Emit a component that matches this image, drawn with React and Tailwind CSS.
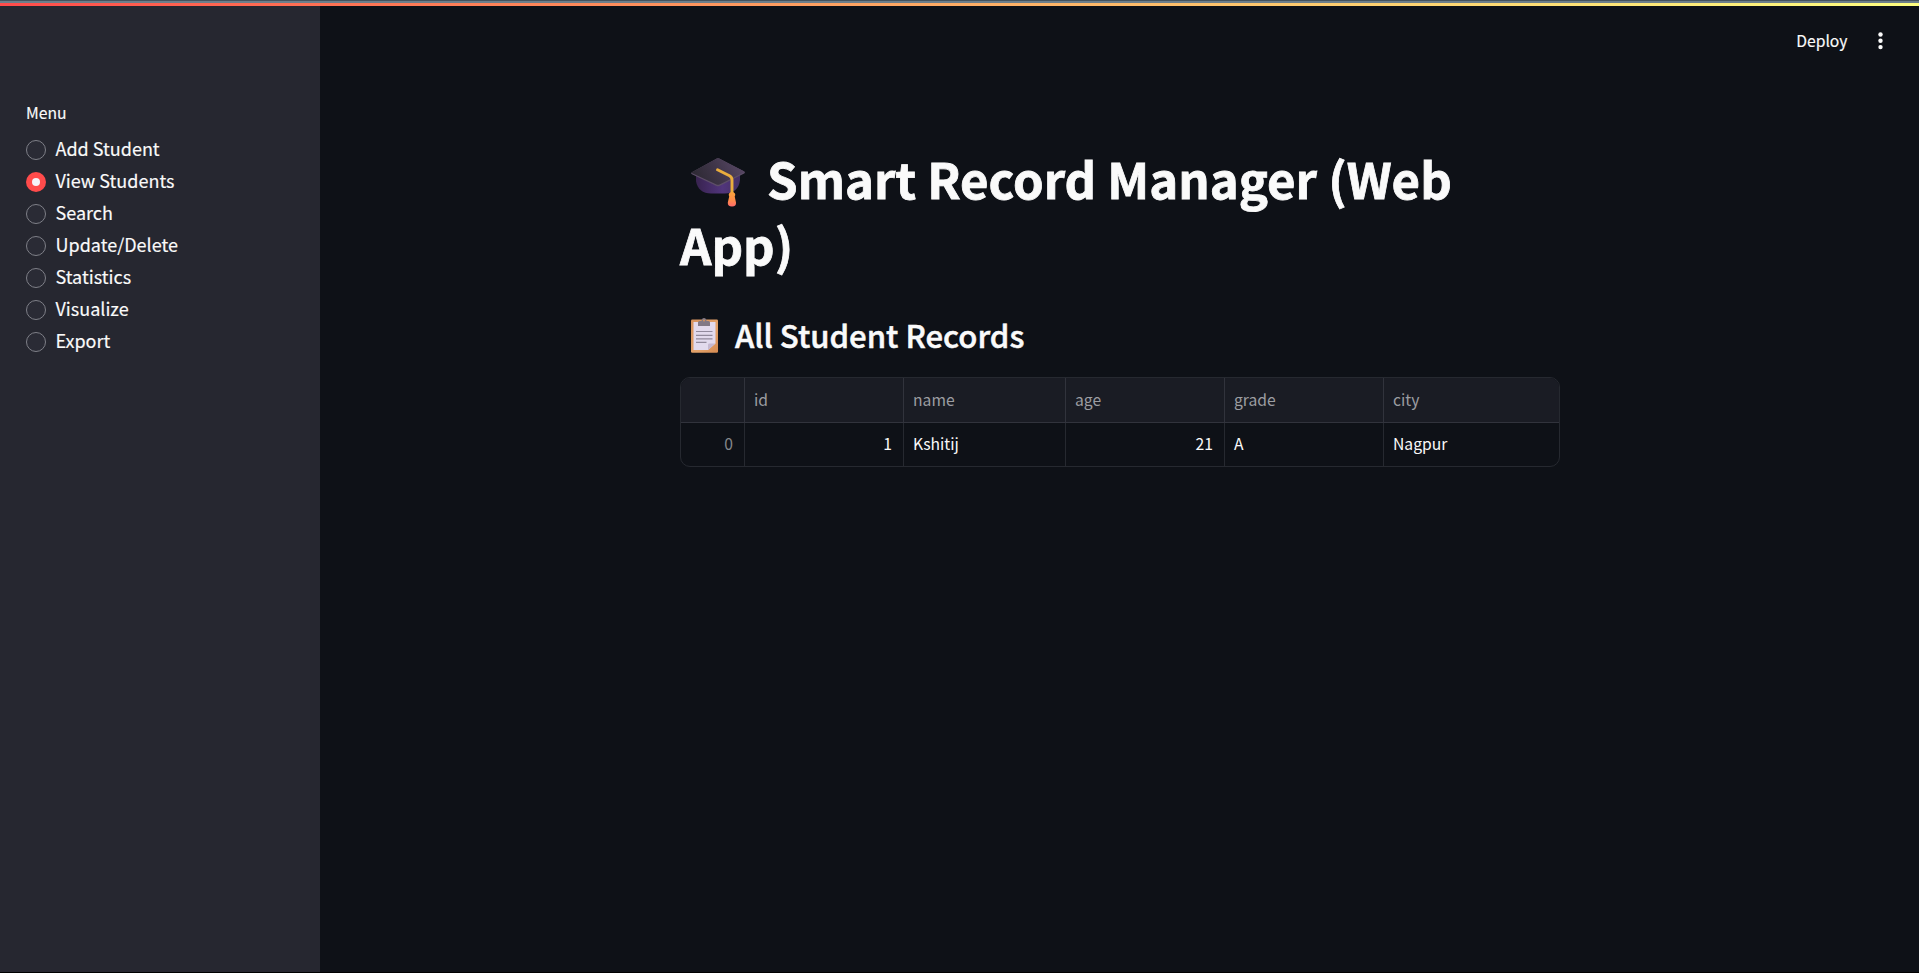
import React from "react";

const FONT = "font-['Noto_Sans_CJK_SC','Noto_Sans',sans-serif]";

const MENU = [
  "Add Student",
  "View Students",
  "Search",
  "Update/Delete",
  "Statistics",
  "Visualize",
  "Export",
];

function GraduationCap() {
  return (
    <svg width="54" height="49" viewBox="0 0 54 49" aria-hidden="true">
      <defs>
        <linearGradient id="board" x1="0" y1="0.6" x2="1" y2="0.3">
          <stop offset="0" stopColor="#2d2933" />
          <stop offset="0.5" stopColor="#40364a" />
          <stop offset="1" stopColor="#594866" />
        </linearGradient>
        <linearGradient id="crown" x1="0" y1="0" x2="1" y2="0">
          <stop offset="0" stopColor="#38234f" />
          <stop offset="0.6" stopColor="#51357c" />
          <stop offset="1" stopColor="#443064" />
        </linearGradient>
        <linearGradient id="tassel" x1="0" y1="0" x2="0" y2="1">
          <stop offset="0" stopColor="#f9a63a" />
          <stop offset="0.6" stopColor="#ff8a4b" />
          <stop offset="1" stopColor="#ff6a6b" />
        </linearGradient>
      </defs>
      <path d="M5 16V23C6 31 12 35.5 20 35.5H34C42 35.5 48 31 49 22V16Z" fill="url(#crown)" />
      <path d="M25.8 .6Q27 0 28.2 .6L53.2 13.5Q54.6 14.4 53.2 15.5L29 27.8Q27 28.8 25 27.8L.9 16.2Q-.6 15.3 .9 14.3Z" fill="#5d4e68" />
      <path d="M25.8 .6Q27 0 28.2 .6L53 13.2Q54 14 52.8 14.6L28.5 26.4Q27 27.1 25.5 26.4L1.2 15.2Q0 14.8 1.2 14Z" fill="url(#board)" />
      <path d="M26.5 11.8L38.5 17.7Q41 19 41 21.8V36" fill="none" stroke="#e9ad3d" strokeWidth="2.9" strokeLinecap="round" />
      <path d="M38 35.5Q41 32 44 35.5L44.3 37L43.7 38.5L45 44.5Q45.4 48.3 41 48.5Q36.5 48.3 36.8 44.5L38.2 38.5L37.7 37Z" fill="url(#tassel)" />
    </svg>
  );
}

function Clipboard() {
  return (
    <svg width="27" height="35" viewBox="0 0 27 35" aria-hidden="true">
      <defs>
        <linearGradient id="wood" x1="0" y1="0" x2="1" y2="1">
          <stop offset="0" stopColor="#d6935f" />
          <stop offset="0.6" stopColor="#e3a26a" />
          <stop offset="1" stopColor="#d58a50" />
        </linearGradient>
      </defs>
      <rect x="0" y="1.5" width="27" height="33.3" rx="1.2" fill="url(#wood)" />
      <path d="M2.5 4H24.5V25.5L17 32H2.5Z" fill="#e2daed" />
      <path d="M24.5 25.5L17 32V26.8Q17 25.5 18.4 25.5Z" fill="#c5b8d0" />
      <path d="M7 8V4.5Q7 3 8.7 3H10.5Q10.8 0 13 0Q15.2 0 15.5 3H17.4Q19 3 19 4.5V8Z" fill="#827986" />
      <circle cx="13" cy="2.5" r="1" fill="#d6935f" />
      <path d="M5 13.5H21.5M5 17.3H21.5M5 20.8H21.5M5 24.3H15.5" stroke="#928a9d" strokeWidth="1.2" />
    </svg>
  );
}

function Radio({ label, checked }) {
  return (
    <label className="flex h-8 items-center gap-[9.5px]">
      {checked ? (
        <span className="flex size-5 items-center justify-center rounded-full bg-[#ff4b4b]">
          <span className="size-[7.5px] rounded-full bg-[#f5f3f8]" />
        </span>
      ) : (
        <span className="size-5 rounded-full border border-[#7f8088] bg-[#2a2b35]" />
      )}
      <span className="pb-[3px] text-[18px] leading-[29px]">{label}</span>
    </label>
  );
}

const COLUMNS = [
  { name: "id", value: "1", width: "w-[159px]", align: "text-right" },
  { name: "name", value: "Kshitij", width: "w-[162px]", align: "" },
  { name: "age", value: "21", width: "w-[159px]", align: "text-right" },
  { name: "grade", value: "A", width: "w-[159px]", align: "" },
  { name: "city", value: "Nagpur", width: "flex-1", align: "" },
];

export default function App() {
  return (
    <div className={`flex h-[973px] w-full flex-col overflow-hidden border-b border-black bg-[#0e1117] text-[#fafafa] [-webkit-text-stroke:0.15px_currentColor] ${FONT}`}>
      <div className="h-px shrink-0 bg-[#46535d]" />
      <div className="h-0.5 shrink-0 bg-[#6d7f8b]" />
      <div className="h-[3px] shrink-0 bg-linear-to-r from-[#ff4b4b] to-[#ffff80]" />
      <div className="flex min-h-0 flex-1">
        <aside className="w-80 shrink-0 bg-[#262730] px-[26px] pt-[94px]">
          <div className="h-[34px] text-[15.7px] leading-[26px]">Menu</div>
          {MENU.map((label) => (
            <Radio key={label} label={label} checked={label === "View Students"} />
          ))}
        </aside>
        <div className="flex flex-1 flex-col">
          <header className="flex h-[70px] items-center justify-end gap-[30.5px] pr-9">
            <span className="text-[15.7px] leading-6">Deploy</span>
            <svg width="5" height="18" viewBox="0 0 5 18" fill="#fafafa" aria-hidden="true">
              <circle cx="2.5" cy="2.5" r="2.2" />
              <circle cx="2.5" cy="8.8" r="2.2" />
              <circle cx="2.5" cy="15.1" r="2.2" />
            </svg>
          </header>
          <main className="ml-[360px] w-[880px] pt-[69px]">
            <h1 className="text-[49.1px] font-bold leading-[66px] [-webkit-text-stroke:0.8px_#fafafa]">
              <span className="flex">
                <span className="w-[87px] pl-[11px] pt-[13px]"><GraduationCap /></span>
                <span className="whitespace-nowrap">Smart Record Manager (Web</span>
              </span>
              App)
            </h1>
            <h2 className="mt-[37px] flex h-[42px] text-[31.1px] font-medium leading-[42px] [-webkit-text-stroke:0.5px_#fafafa]">
              <span className="w-[55px] pl-[11px] pt-1"><Clipboard /></span>
              <span>All Student Records</span>
            </h2>
            <div className="mt-[21px] h-[90px] overflow-hidden rounded-[10px] border border-[#262930] text-[15.7px] [-webkit-text-stroke:0px]">
              <div className="flex h-[45px] border-b border-[#31333c] bg-[#1a1c24] leading-[44px] text-[#9c9da1]">
                <div className="w-16 border-r border-[#31333c]" />
                {COLUMNS.map((c) => (
                  <div key={c.name} className={`${c.width} border-r border-[#31333c] px-[9px] last:border-r-0`}>{c.name}</div>
                ))}
              </div>
              <div className="flex h-[43px] leading-[42px]">
                <div className="w-16 border-r border-[#262930] pr-[11px] text-right text-[#86888b]">0</div>
                {COLUMNS.map((c) => (
                  <div key={c.name} className={`${c.width} ${c.align} border-r border-[#262930] pl-[9px] pr-[11px] last:border-r-0`}>{c.value}</div>
                ))}
              </div>
            </div>
          </main>
        </div>
      </div>
    </div>
  );
}
